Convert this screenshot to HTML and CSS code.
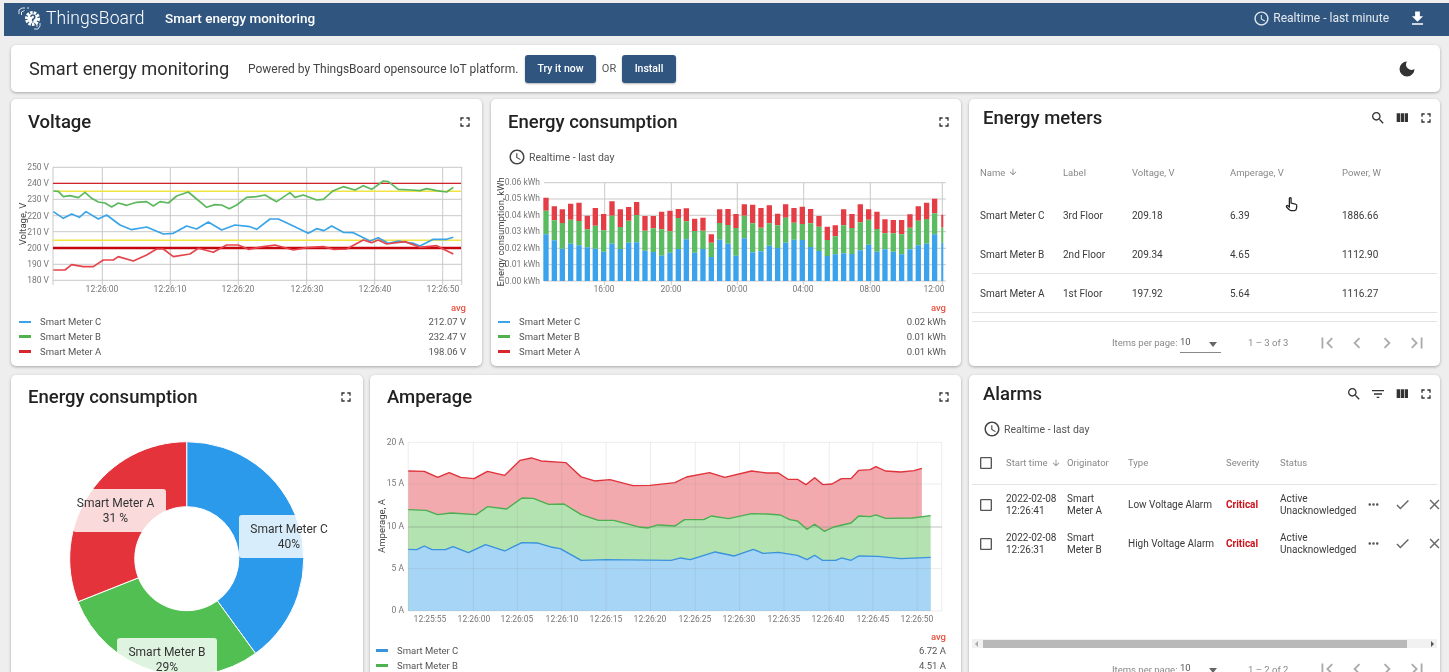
FILE: index.html
```html
<!DOCTYPE html>
<html lang="en">
<head>
<meta charset="utf-8">
<title>Smart energy monitoring</title>
<link rel="stylesheet" href="styles.css">
</head>
<body>
<svg class="sprite" width="0" height="0" aria-hidden="true">
  <symbol id="i-clock" viewBox="0 0 24 24"><path d="M11.99 2C6.47 2 2 6.48 2 12s4.47 10 9.99 10C17.52 22 22 17.52 22 12S17.52 2 11.99 2zM12 20c-4.42 0-8-3.58-8-8s3.58-8 8-8 8 3.58 8 8-3.58 8-8 8zM12.5 7H11v6l5.25 3.15.75-1.23-4.5-2.67z"/></symbol>
  <symbol id="i-full" viewBox="0 0 24 24"><path d="M7 14H5v5h5v-2H7v-3zm-2-4h2V7h3V5H5v5zm12 7h-3v2h5v-5h-2v3zM14 5v2h3v3h2V5h-5z"/></symbol>
  <symbol id="i-search" viewBox="0 0 24 24"><path d="M15.5 14h-.79l-.28-.27C15.41 12.59 16 11.11 16 9.5 16 5.91 13.09 3 9.5 3S3 5.91 3 9.5 5.91 16 9.5 16c1.61 0 3.09-.59 4.23-1.57l.27.28v.79l5 4.99L20.49 19l-4.99-5zm-6 0C7.01 14 5 11.99 5 9.5S7.01 5 9.5 5 14 7.01 14 9.5 11.99 14 9.5 14z"/></symbol>
  <symbol id="i-cols" viewBox="0 0 24 24"><path d="M10 18h5V5h-5v13zm-6 0h5V5H4v13zM16 5v13h5V5h-5z"/></symbol>
  <symbol id="i-filter" viewBox="0 0 24 24"><path d="M10 18h4v-2h-4v2zM3 6v2h18V6H3zm3 7h12v-2H6v2z"/></symbol>
  <symbol id="i-check" viewBox="0 0 24 24"><path d="M9 16.17L4.83 12l-1.42 1.41L9 19 21 7l-1.41-1.41z"/></symbol>
  <symbol id="i-close" viewBox="0 0 24 24"><path d="M19 6.41L17.59 5 12 10.59 6.41 5 5 6.41 10.59 12 5 17.59 6.41 19 12 13.41 17.59 19 19 17.59 13.41 12z"/></symbol>
  <symbol id="i-more" viewBox="0 0 24 24"><path d="M6 10c-1.1 0-2 .9-2 2s.9 2 2 2 2-.9 2-2-.9-2-2-2zm12 0c-1.1 0-2 .9-2 2s.9 2 2 2 2-.9 2-2-.9-2-2-2zm-6 0c-1.1 0-2 .9-2 2s.9 2 2 2 2-.9 2-2-.9-2-2-2z"/></symbol>
  <symbol id="i-first" viewBox="0 0 24 24"><path d="M18.41 16.59L13.82 12l4.59-4.59L17 6l-6 6 6 6zM6 6h2v12H6z"/></symbol>
  <symbol id="i-prev" viewBox="0 0 24 24"><path d="M15.41 7.41L14 6l-6 6 6 6 1.41-1.41L10.83 12z"/></symbol>
  <symbol id="i-next" viewBox="0 0 24 24"><path d="M10 6L8.59 7.41 13.17 12l-4.58 4.59L10 18l6-6z"/></symbol>
  <symbol id="i-last" viewBox="0 0 24 24"><path d="M5.59 7.41L10.18 12l-4.59 4.59L7 18l6-6-6-6zM16 6h2v12h-2z"/></symbol>
  <symbol id="i-down" viewBox="0 0 24 24"><path d="M20 12l-1.41-1.41L13 16.17V4h-2v12.17l-5.58-5.59L4 12l8 8 8-8z"/></symbol>
  <symbol id="i-download" viewBox="0 0 24 24"><path d="M19 9h-4V3H9v6H5l7 7 7-7zM5 18v2h14v-2H5z"/></symbol>
  <symbol id="i-box" viewBox="0 0 24 24"><path d="M19 5v14H5V5h14m0-2H5c-1.1 0-2 .9-2 2v14c0 1.1.9 2 2 2h14c1.1 0 2-.9 2-2V5c0-1.1-.9-2-2-2z"/></symbol>
</svg>

<header class="topbar">
  <svg class="logo" viewBox="0 0 24 24" aria-hidden="true">
    <path class="logo-lines" d="M1 8V4l3-2h3M3.500 9V6l3-1.500M9 2h2M16 23h4l2-3v-3M19 21v-3"/>
    <circle class="logo-gear" cx="14.500" cy="12.500" r="6"/>
    <circle class="logo-core" cx="14.500" cy="12.500" r="5"/>
    <path class="logo-mark" d="M12.800 10.800a2 2 0 1 1 3 1.900l-1.100.9v1.300M14.700 15.400v1.200"/>
  </svg>
  <span class="brand">ThingsBoard</span>
  <span class="topbar-title">Smart energy monitoring</span>
  <span class="topbar-time"><svg class="ic ic-15"><use href="#i-clock"/></svg>Realtime - last minute</span>
  <svg class="ic ic-download"><use href="#i-download"/></svg>
</header>

<main class="page">
  <section class="card hero">
    <h1>Smart energy monitoring</h1>
    <p>Powered by ThingsBoard opensource IoT platform.</p>
    <a class="btn">Try it now</a>
    <span class="or">OR</span>
    <a class="btn btn-install">Install</a>
    <svg class="moon" viewBox="0 0 24 24" aria-hidden="true"><path d="M12 3a9 9 0 1 0 9 9 6.5 6.5 0 0 1-9-9z"/></svg>
  </section>

  <div class="row row-top">
    <section class="card">
      <div class="card-head"><h2>Voltage</h2><div class="tools"><svg class="ic ic-tool"><use href="#i-full"/></svg></div></div>
      <svg class="chart chart-voltage" viewBox="11 139 471 162" aria-label="Voltage chart">
        <g class="grid">
          <path d="M53 167.300H462M53 183.300H462M53 199.300H462M53 215.700H462M53 231.700H462M53 248.300H462M53 264.300H462M53 280.300H462M53 167V285M102.300 167V285M170.300 167V285M238.300 167V285M306.700 167V285M374.700 167V285M442.700 167V285M461.700 167V285"/>
        </g>
        <g class="thresholds">
          <path class="t-red" d="M53 183.300H461"/>
          <path class="t-yellow" d="M53 191.300H461M53 240.300H461"/>
          <path class="t-red-thick" d="M53 248H461"/>
        </g>
        <g transform="translate(0 100) scale(.3333)" class="lines">
          <polyline class="l-green" points="160,273 175,274 190,290 210,287 235,293 255,277 275,295 295,306 315,309 335,321 355,309 380,316 410,307 440,305 460,318 480,305 505,309 530,288 565,276 590,297 620,322 645,314 665,315 688,326 710,315 740,292 770,290 795,285 830,305 870,278 885,292 910,285 950,300 970,298 1000,272 1030,260 1065,270 1090,257 1115,268 1150,243 1165,245 1195,268 1235,270 1260,272 1280,266 1310,272 1340,276 1360,262"/>
          <polyline class="l-blue" points="160,335 190,355 215,342 238,352 258,335 295,357 320,345 360,375 395,389 440,381 490,402 520,400 560,378 590,387 625,366 665,390 705,375 750,380 770,388 810,357 835,357 880,378 925,400 950,386 972,392 995,378 1030,397 1060,398 1110,423 1135,413 1165,430 1195,423 1240,430 1260,438 1300,418 1340,418 1360,412"/>
          <polyline class="l-red" points="160,510 195,510 215,494 250,500 280,500 310,480 340,480 355,470 400,483 440,465 470,447 490,447 520,470 570,462 595,445 640,457 680,435 715,435 745,448 790,440 825,435 880,450 920,443 970,440 1000,448 1040,447 1090,420 1115,428 1135,420 1160,432 1215,425 1260,442 1310,437 1360,462"/>
        </g>
        <g class="ticks" text-anchor="end">
          <text x="49" y="170">250 V</text><text x="49" y="186">240 V</text><text x="49" y="202">230 V</text><text x="49" y="219">220 V</text><text x="49" y="235">210 V</text><text x="49" y="251">200 V</text><text x="49" y="267">190 V</text><text x="49" y="283">180 V</text>
        </g>
        <g class="ticks" text-anchor="middle">
          <text x="102" y="292">12:26:00</text><text x="170" y="292">12:26:10</text><text x="238" y="292">12:26:20</text><text x="307" y="292">12:26:30</text><text x="375" y="292">12:26:40</text><text x="443" y="292">12:26:50</text>
        </g>
        <text class="axis" transform="translate(26 224) rotate(-90)" text-anchor="middle">Voltage, V</text>
      </svg>
      <div class="legend">
        <div class="legend-avg">avg</div>
        <div class="legend-row"><i class="sw sw-blue"></i><span>Smart Meter C</span><b>212.07 V</b></div>
        <div class="legend-row"><i class="sw sw-green"></i><span>Smart Meter B</span><b>232.47 V</b></div>
        <div class="legend-row"><i class="sw sw-red"></i><span>Smart Meter A</span><b>198.06 V</b></div>
      </div>
    </section>

    <section class="card">
      <div class="card-head"><h2>Energy consumption</h2><div class="tools"><svg class="ic ic-tool"><use href="#i-full"/></svg></div></div>
      <div class="sub"><svg class="ic ic-18"><use href="#i-clock"/></svg>Realtime - last day</div>
      <svg class="chart chart-energy" viewBox="491 170 470 131" aria-label="Energy consumption chart">
        <g class="grid"><path d="M544 182.700H946M544 199H946M544 215.300H946M544 231.700H946M544 248.300H946M544 264.700H946M544 281H946M604.700 183V285M671.300 183V285M737.300 183V285M803.700 183V285M870.300 183V285M942.300 183V285"/></g>
        <g transform="translate(485 100) scale(.3333)">
          <path class="bar bar-red" d="M183 332V293M208 361V319M232 369V328M257 359V311M282 363V308M307 388V347M331 377V324M356 391V342M381 347V304M406 381V328M431 362V321M455 345V306M480 392V348M505 385V348M530 388V335M555 394V332M580 354V327M604 364V325M629 393V356M654 392V353M679 428V403M704 369V328M729 375V327M753 384V342M778 347V313M803 370V314M828 383V324M853 370V316M878 376V341M902 353V313M927 368V324M952 372V320M977 370V327M1002 380V348M1027 420V380M1051 409V376M1076 376V328M1101 384V342M1126 367V313M1151 359V328M1176 387V335M1200 400V358M1225 400V360M1250 403V360M1275 383V343M1300 362V319M1325 357V308M1349 340V296"/>
          <path class="bar bar-green" d="M183 403V332M208 421V361M232 446V369M257 431V359M282 436V363M307 442V388M331 446V377M356 455V391M381 431V347M406 447V381M431 428V362M455 427V345M480 452V392M505 456V385M530 467V388M555 458V394M580 447V354M604 418V364M629 458V393M654 447V392M679 471V428M704 419V369M729 431V375M753 467V384M778 415V347M803 457V370M828 454V383M853 437V370M878 444V376M902 428V353M927 419V368M952 420V372M977 441V370M1002 453V380M1027 468V420M1051 463V409M1076 460V376M1101 462V384M1126 451V367M1151 434V359M1176 455V387M1200 448V400M1225 455V400M1250 463V403M1275 448V383M1300 436V362M1325 431V357M1349 403V340"/>
          <path class="bar bar-blue" d="M183 543V403M208 543V421M232 543V446M257 543V431M282 543V436M307 543V442M331 543V446M356 543V455M381 543V431M406 543V447M431 543V428M455 543V427M480 543V452M505 543V456M530 543V467M555 543V458M580 543V447M604 543V418M629 543V458M654 543V447M679 543V471M704 543V419M729 543V431M753 543V467M778 543V415M803 543V457M828 543V454M853 543V437M878 543V444M902 543V428M927 543V419M952 543V420M977 543V441M1002 543V453M1027 543V468M1051 543V463M1076 543V460M1101 543V462M1126 543V451M1151 543V434M1176 543V455M1200 543V448M1225 543V455M1250 543V463M1275 543V448M1300 543V436M1325 543V431M1349 543V403"/>
          <path class="bar-last" d="M1372 543V428"/>
          <path class="bar-last-g" d="M1372 428V382"/>
          <path class="bar-last-r" d="M1372 382V344"/>
        </g>
        <g class="ticks" text-anchor="end">
          <text x="540" y="185">0.06 kWh</text><text x="540" y="201">0.05 kWh</text><text x="540" y="218">0.04 kWh</text><text x="540" y="234">0.03 kWh</text><text x="540" y="251">0.02 kWh</text><text x="540" y="267">0.01 kWh</text><text x="540" y="284">0.00 kWh</text>
        </g>
        <g class="ticks" text-anchor="middle">
          <text x="604" y="292">16:00</text><text x="671" y="292">20:00</text><text x="737" y="292">00:00</text><text x="803" y="292">04:00</text><text x="870" y="292">08:00</text><text x="934" y="292">12:00</text>
        </g>
        <text class="axis" transform="translate(503.500 232) rotate(-90)" text-anchor="middle">Energy consumption, kWh</text>
      </svg>
      <div class="legend legend-tight">
        <div class="legend-avg">avg</div>
        <div class="legend-row"><i class="sw sw-blue"></i><span>Smart Meter C</span><b>0.02 kWh</b></div>
        <div class="legend-row"><i class="sw sw-green"></i><span>Smart Meter B</span><b>0.01 kWh</b></div>
        <div class="legend-row"><i class="sw sw-red"></i><span>Smart Meter A</span><b>0.01 kWh</b></div>
      </div>
    </section>

    <section class="card">
      <div class="card-head head-table"><h2>Energy meters</h2><div class="tools"><svg class="ic ic-tool"><use href="#i-search"/></svg><svg class="ic ic-tool"><use href="#i-cols"/></svg><svg class="ic ic-tool"><use href="#i-full"/></svg></div></div>
      <div class="meters">
        <div class="m-row m-head"><span class="sort">Name <svg class="ic ic-10"><use href="#i-down"/></svg></span><span>Label</span><span>Voltage, V</span><span>Amperage, V</span><span>Power, W</span></div>
        <div class="m-row"><span>Smart Meter C</span><span>3rd Floor</span><span>209.18</span><span>6.39</span><span>1886.66</span></div>
        <div class="m-row m-line"><span>Smart Meter B</span><span>2nd Floor</span><span>209.34</span><span>4.65</span><span>1112.90</span></div>
        <div class="m-row m-line"><span>Smart Meter A</span><span>1st Floor</span><span>197.92</span><span>5.64</span><span>1116.27</span></div>
      </div>
      <div class="pager pager-line">
        <span class="pg-label">Items per page:</span>
        <span class="pg-select">10<i></i></span>
        <span class="pg-range">1 – 3 of 3</span>
        <svg class="ic pg-ic"><use href="#i-first"/></svg><svg class="ic pg-ic"><use href="#i-prev"/></svg><svg class="ic pg-ic"><use href="#i-next"/></svg><svg class="ic pg-ic"><use href="#i-last"/></svg>
      </div>
      <svg class="cursor" viewBox="0 0 24 24" aria-hidden="true"><path d="M9 3.500c0-1.500 2.400-1.500 2.400 0V10l6 1.300c1.600.4 2.300 1.400 2.100 3l-.6 4c-.2 1.400-1.200 2.200-2.600 2.200h-5c-1 0-1.800-.4-2.400-1.200L5 15.500c-1-1.400.8-2.900 2-1.700l2 1.700z"/></svg>
    </section>
  </div>

  <div class="row row-bottom">
    <section class="card card-donut">
      <div class="card-head"><h2>Energy consumption</h2><div class="tools"><svg class="ic ic-tool"><use href="#i-full"/></svg></div></div>
      <svg class="chart chart-donut" viewBox="11 415 352 270" aria-label="Energy consumption by meter">
        <path class="sl-blue" d="M186.700 441.700A117 117 0 0 1 255.500 653.400L217.300 600.800A52 52 0 0 0 186.700 506.700Z"/>
        <path class="sl-green" d="M255.500 653.400A117 117 0 0 1 77.900 601.800L138.400 577.800A52 52 0 0 0 217.300 600.800Z"/>
        <path class="sl-red" d="M77.900 601.800A117 117 0 0 1 186.700 441.700L186.700 506.700A52 52 0 0 0 138.400 577.800Z"/>
      </svg>
      <div class="pie-label pl-a">Smart Meter A<br>31 %</div>
      <div class="pie-label pl-c">Smart Meter C<br>40%</div>
      <div class="pie-label pl-b">Smart Meter B<br>29%</div>
    </section>

    <section class="card">
      <div class="card-head"><h2>Amperage</h2><div class="tools"><svg class="ic ic-tool"><use href="#i-full"/></svg></div></div>
      <svg class="chart chart-amp" viewBox="370 415 591 215" aria-label="Amperage chart">
        <g transform="translate(365 372) scale(.3827 .3333)">
          <polygon class="a-red" points="113,297 155,298 190,316 220,302 250,316 285,320 320,298 365,310 405,265 435,258 460,267 525,272 565,315 600,327 640,323 700,341 745,340 810,332 840,315 900,302 940,316 1010,297 1050,303 1080,303 1105,322 1130,322 1152,338 1175,317 1197,338 1220,336 1245,320 1270,320 1290,295 1320,293 1335,284 1360,297 1400,300 1435,296 1455,289 1455,717 113,717"/>
          <polygon class="a-green" points="113,413 160,415 190,428 225,423 290,428 320,404 370,411 410,378 440,379 480,397 520,396 565,428 610,445 650,445 715,465 740,468 765,459 810,462 835,443 885,443 905,432 950,440 1010,425 1050,426 1085,429 1110,443 1130,447 1155,472 1175,457 1200,478 1225,465 1270,453 1290,432 1320,434 1335,429 1360,439 1430,438 1478,431 1478,717 113,717"/>
          <polygon class="a-blue" points="113,532 135,533 155,522 175,533 210,533 230,524 270,542 315,518 365,537 410,512 450,513 485,525 510,530 565,565 630,563 800,565 825,558 850,563 915,540 965,552 1015,532 1040,544 1080,541 1130,550 1155,563 1175,550 1195,565 1230,565 1245,558 1270,565 1290,552 1340,553 1400,560 1478,556 1478,717 113,717"/>
          <path class="amp-grid" d="M113 211H1507M113 336H1507M113 590H1507M113 717H1507M113 211V717M283 211V717M398 211V717M514 211V717M630 211V717M746 211V717M863 211V717M979 211V717M1095 211V717M1213 211V717M1327 211V717M1443 211V717M1507 211V717"/>
          <path class="amp-grid-strong" d="M113 465H1507"/>
          <polyline class="al-red" points="113,297 155,298 190,316 220,302 250,316 285,320 320,298 365,310 405,265 435,258 460,267 525,272 565,315 600,327 640,323 700,341 745,340 810,332 840,315 900,302 940,316 1010,297 1050,303 1080,303 1105,322 1130,322 1152,338 1175,317 1197,338 1220,336 1245,320 1270,320 1290,295 1320,293 1335,284 1360,297 1400,300 1435,296 1455,289"/>
          <polyline class="al-green" points="113,413 160,415 190,428 225,423 290,428 320,404 370,411 410,378 440,379 480,397 520,396 565,428 610,445 650,445 715,465 740,468 765,459 810,462 835,443 885,443 905,432 950,440 1010,425 1050,426 1085,429 1110,443 1130,447 1155,472 1175,457 1200,478 1225,465 1270,453 1290,432 1320,434 1335,429 1360,439 1430,438 1478,431"/>
          <polyline class="al-blue" points="113,532 135,533 155,522 175,533 210,533 230,524 270,542 315,518 365,537 410,512 450,513 485,525 510,530 565,565 630,563 800,565 825,558 850,563 915,540 965,552 1015,532 1040,544 1080,541 1130,550 1155,563 1175,550 1195,565 1230,565 1245,558 1270,565 1290,552 1340,553 1400,560 1478,556"/>
        </g>
        <g class="ticks" text-anchor="end">
          <text x="404" y="445">20 A</text><text x="404" y="486">15 A</text><text x="404" y="529">10 A</text><text x="404" y="571">5 A</text><text x="404" y="613">0 A</text>
        </g>
        <g class="ticks" text-anchor="middle">
          <text x="430" y="622">12:25:55</text><text x="474" y="622">12:26:00</text><text x="517" y="622">12:26:05</text><text x="562" y="622">12:26:10</text><text x="606" y="622">12:26:15</text><text x="650" y="622">12:26:20</text><text x="695" y="622">12:26:25</text><text x="739" y="622">12:26:30</text><text x="784" y="622">12:26:35</text><text x="828" y="622">12:26:40</text><text x="873" y="622">12:26:45</text><text x="917" y="622">12:26:50</text>
        </g>
        <text class="axis" transform="translate(385 526) rotate(-90)" text-anchor="middle">Amperage, A</text>
      </svg>
      <div class="legend legend-amp">
        <div class="legend-avg">avg</div>
        <div class="legend-row"><i class="sw sw-blue2"></i><span>Smart Meter C</span><b>6.72 A</b></div>
        <div class="legend-row"><i class="sw sw-green"></i><span>Smart Meter B</span><b>4.51 A</b></div>
      </div>
    </section>

    <section class="card">
      <div class="card-head head-table"><h2>Alarms</h2><div class="tools"><svg class="ic ic-tool"><use href="#i-search"/></svg><svg class="ic ic-tool"><use href="#i-filter"/></svg><svg class="ic ic-tool"><use href="#i-cols"/></svg><svg class="ic ic-tool"><use href="#i-full"/></svg></div></div>
      <div class="sub sub-alarm"><svg class="ic ic-18"><use href="#i-clock"/></svg>Realtime - last day</div>
      <div class="alarms">
        <div class="a-row a-head"><svg class="ic ic-box"><use href="#i-box"/></svg><span class="sort">Start time <svg class="ic ic-10"><use href="#i-down"/></svg></span><span>Originator</span><span>Type</span><span>Severity</span><span>Status</span></div>
        <div class="a-row"><svg class="ic ic-box"><use href="#i-box"/></svg><span>2022-02-08<br>12:26:41</span><span>Smart<br>Meter A</span><span>Low Voltage Alarm</span><span class="crit">Critical</span><span>Active<br>Unacknowledged</span><svg class="ic ic-act ic-more"><use href="#i-more"/></svg><svg class="ic ic-act"><use href="#i-check"/></svg><svg class="ic ic-act"><use href="#i-close"/></svg></div>
        <div class="a-row"><svg class="ic ic-box"><use href="#i-box"/></svg><span>2022-02-08<br>12:26:31</span><span>Smart<br>Meter B</span><span>High Voltage Alarm</span><span class="crit">Critical</span><span>Active<br>Unacknowledged</span><svg class="ic ic-act ic-more"><use href="#i-more"/></svg><svg class="ic ic-act"><use href="#i-check"/></svg><svg class="ic ic-act"><use href="#i-close"/></svg></div>
      </div>
      <div class="scroll"><i class="sc-left"></i><span class="thumb"></span><i class="sc-right"></i></div>
      <div class="pager">
        <span class="pg-label">Items per page:</span>
        <span class="pg-select">10<i></i></span>
        <span class="pg-range">1 – 2 of 2</span>
        <svg class="ic pg-ic"><use href="#i-first"/></svg><svg class="ic pg-ic"><use href="#i-prev"/></svg><svg class="ic pg-ic"><use href="#i-next"/></svg><svg class="ic pg-ic"><use href="#i-last"/></svg>
      </div>
    </section>
  </div>
</main>
</body>
</html>
```
FILE: styles.css
```css
* { box-sizing: border-box; }
html, body { margin: 0; height: 672px; overflow: hidden; }
body {
  background: #eeeeee;
  font-family: Roboto, "Liberation Sans", sans-serif;
  color: #2b2b2b;
  padding-top: 3px;
}
main, .topbar { filter: blur(0.55px); }
.sprite { position: absolute; }
.ic { fill: currentColor; display: block; flex: none; }

.topbar {
  height: 33px;
  margin-left: 4px;
  background: #305680;
  color: #fff;
  display: flex;
  align-items: center;
  padding: 0 22px 3px 14px;
}
.logo { width: 24px; height: 24px; margin-right: 4px; flex: none; }
.logo-lines { fill: none; stroke: #dfe7ef; stroke-width: 1; }
.logo-gear { fill: none; stroke: #fff; stroke-width: 3; stroke-dasharray: 2.500 1.100; }
.logo-core { fill: #fff; }
.logo-mark { fill: none; stroke: #305680; stroke-width: 1.600; }
.brand { font-size: 17.500px; font-weight: 300; width: 97px; white-space: nowrap; letter-spacing: .1px; }
.topbar-title { font-size: 13.500px; font-weight: 500; margin-left: 22px; white-space: nowrap; }
.topbar-time { margin-left: auto; display: flex; align-items: center; gap: 3px; font-size: 12px; color: #e4e9ef; }
.ic-15 { width: 17px; height: 17px; }
.ic-download { width: 19px; height: 19px; margin-left: 19px; }

.page { padding: 9px 9px 0 11px; display: flex; flex-direction: column; gap: 7px; }
.card {
  position: relative;
  background: #fff;
  border-radius: 5px;
  box-shadow: 0 1px 3px rgba(0,0,0,.3);
  overflow: hidden;
  display: flex;
  flex-direction: column;
}
.hero {
  height: 47px;
  flex-direction: row;
  align-items: center;
  padding: 0 23px 0 18px;
}
.hero h1 { margin: 0; font-size: 18.200px; font-weight: 400; white-space: nowrap; width: 219px; }
.hero p { margin: 0; font-size: 12px; color: #444; white-space: nowrap; width: 277px; }
.btn {
  background: #305680; color: #fff; height: 28px; width: 71px;
  display: flex; align-items: center; justify-content: center;
  font-size: 10.500px; font-weight: 500; border-radius: 3px;
  box-shadow: 0 1px 2px rgba(0,0,0,.3);
}
.btn-install { width: 54px; }
.or { font-size: 11px; color: #555; width: 26px; text-align: center; }
.moon { width: 20px; height: 20px; margin-left: auto; fill: #333; }

.row { display: grid; }
.row-top { grid-template-columns: 472px 470px 471px; height: 267px; column-gap: 8px; }
.row-top > :first-child { margin-right: 1px; }
.row-bottom { grid-template-columns: 352px 591px 471px; height: 310px; column-gap: 7px; margin-top: 2px; }
.row-bottom > :nth-child(3) { margin-left: 1px; margin-right: -1px; }

.card-head {
  height: 40px; flex: none;
  display: flex; align-items: center; justify-content: space-between;
  padding: 5px 9px 0 17px;
}
.row-bottom .card-head { padding-top: 3px; }
.card-head h2 { margin: 0; font-size: 18.500px; font-weight: 500; color: #222; white-space: nowrap; }
.row .head-table { padding: 0 6px 0 14px; height: 38px; }
.tools { display: flex; gap: 8px; color: #333; align-items: center; }
.ic-tool { width: 16px; height: 16px; }

.sub { height: 31px; flex: none; padding: 5px 0 0 17px; display: flex; align-items: center; gap: 3px; font-size: 10.500px; color: #555; }
.ic-18 { width: 18px; height: 18px; color: #444; }
.sub-alarm { height: 32px; padding: 0 0 0 14px; }

.chart { display: block; flex: none; width: 100%; }
.chart-voltage { height: 162px; }
.chart-energy { height: 131px; }
.chart-amp { height: 215px; }
.chart-donut { height: 270px; }
.grid path { fill: none; stroke: #c9c9c9; stroke-width: 1; }
.ticks text { font-size: 8.500px; fill: #777; font-family: Roboto, sans-serif; }
.axis { font-size: 9.500px; fill: #444; font-family: Roboto, sans-serif; }
.t-red { stroke: #d3222a; stroke-width: 1.200; fill: none; }
.t-yellow { stroke: #f0e442; stroke-width: 1.500; fill: none; }
.t-red-thick { stroke: #c5060d; stroke-width: 2.500; fill: none; }
.lines polyline { fill: none; stroke-width: 5; stroke-linejoin: round; }
.l-green { stroke: #5cb85c; }
.l-blue { stroke: #3aa4e8; }
.l-red { stroke: #e5444b; }
.bar { fill: none; stroke-width: 16; }
.bar-red, .bar-last-r { stroke: #e53d45; }
.bar-green, .bar-last-g { stroke: #5bbb60; }
.bar-blue, .bar-last { stroke: #3ba3ec; }
.bar-last, .bar-last-g, .bar-last-r { fill: none; stroke-width: 6; }
.a-red { fill: #f2aaaf; }
.a-green { fill: #b4e3b2; }
.a-blue { fill: #a7d5f5; }
.amp-grid { fill: none; stroke: #8a8a8a; stroke-width: 2; opacity: .22; }
.amp-grid-strong { fill: none; stroke: #7d8f7d; stroke-width: 2; opacity: .7; }
.al-red, .al-green, .al-blue { fill: none; stroke-width: 4; stroke-linejoin: round; }
.al-red { stroke: #e0343c; }
.al-green { stroke: #4cae50; }
.al-blue { stroke: #3b93dc; }

.legend { padding: 0 16px 0 8px; font-size: 9.500px; color: #555; flex: none; }
.legend-tight { padding-left: 7px; padding-right: 15px; }
.legend-amp { padding-left: 6px; padding-right: 15px; }
.legend-avg { height: 13px; line-height: 13px; text-align: right; color: #e8503f; font-weight: 500; font-size: 9.500px; }
.legend-row { height: 15px; display: flex; align-items: center; }
.legend-row span { margin-left: 9px; }
.legend-row b { margin-left: auto; font-weight: 400; }
.sw { width: 12px; height: 2px; display: block; }
.sw-blue { background: #3aa4e8; }
.sw-blue2 { background: #3b93dc; height: 3px; }
.sw-green { background: #4fb24f; height: 3px; }
.sw-red { background: #d8262e; height: 3px; }

.sl-blue { fill: #2b9aea; stroke: #fff; stroke-width: 1; }
.sl-green { fill: #51bf52; stroke: #fff; stroke-width: 1; }
.sl-red { fill: #e5333b; stroke: #fff; stroke-width: 1; }
.pie-label {
  position: absolute;
  background: rgba(255,255,255,.82);
  border-radius: 3px;
  font-size: 12px;
  line-height: 14.500px;
  color: #333;
  text-align: center;
  padding: 7px 0;
}
.pl-a { left: 62px; top: 114px; width: 93px; height: 43px; padding-right: 8px; }
.pl-c { left: 228px; top: 140px; width: 93px; height: 43px; padding-left: 7px; }
.pl-b { left: 106px; top: 263px; width: 100px; height: 43px; }

.meters { margin: 0 3px; flex: none; font-size: 10px; color: #3a3a3a; }
.m-row {
  display: grid;
  grid-template-columns: 83px 69px 98px 112px 1fr;
  padding-left: 8px;
  height: 39px;
  align-items: center;
  white-space: nowrap;
}
.m-row.m-head { height: 44px; margin-top: 13px; margin-bottom: 2px; color: #888; font-size: 9.500px; }
.m-line { border-bottom: 1px solid #e3e3e3; }
.sort { display: flex; align-items: center; gap: 3px; }
.ic-10 { width: 10px; height: 10px; color: #888; }

.pager { display: flex; align-items: center; height: 42px; padding-left: 143px; font-size: 9.500px; color: #888; flex: none; }
.pager-line { margin: 8px 3px 0; padding-left: 140px; border-top: 1px solid #e3e3e3; }
.pg-label { width: 68px; white-space: nowrap; }
.pg-select { width: 41px; height: 17px; margin-top: 3px; border-bottom: 1px solid #888; position: relative; color: #555; }
.pg-select i { position: absolute; right: 4px; top: 6px; border: 4px solid transparent; border-top: 5px solid #666; border-bottom: 0; }
.pg-range { width: 64px; margin-left: 27px; white-space: nowrap; }
.pg-ic { width: 30px; height: 22px; color: #aaa; }

.alarms { flex: none; margin: 0 3px; font-size: 10px; color: #3a3a3a; }
.a-row {
  display: grid;
  grid-template-columns: 26px 61px 61px 98px 54px 87px 29px 32px 24px;
  padding-left: 8px;
  height: 39px;
  align-items: center;
  white-space: nowrap;
  line-height: 12px;
}
.a-row.a-head { height: 40px; padding-bottom: 4px; border-bottom: 1px solid #e3e3e3; color: #888; font-size: 9.500px; }
.ic-box { width: 16px; height: 16px; margin-left: -2px; color: #555; }
.crit { color: #d0121b; font-weight: 700; }
.ic-act { width: 17px; height: 17px; color: #666; margin-left: -2px; }
.ic-act.ic-more { width: 15px; height: 15px; color: #555; margin-left: -1px; }

.scroll { margin: 76px 3px 0; height: 9px; background: #f1f1f1; display: flex; align-items: center; flex: none; }
.thumb { margin-left: 5px; width: 424px; height: 8px; background: #b9b9b9; }
.sc-left { width: 0; height: 0; margin-left: 3px; border: 3px solid transparent; border-right-color: #aaa; border-left: 0; }
.sc-right { width: 0; height: 0; margin-left: 24px; border: 3px solid transparent; border-left-color: #555; border-right: 0; }

.cursor {
  position: absolute; left: 314px; top: 97px; width: 17px; height: 17px;
  fill: #fff; stroke: #222; stroke-width: 1.800;
}
```
